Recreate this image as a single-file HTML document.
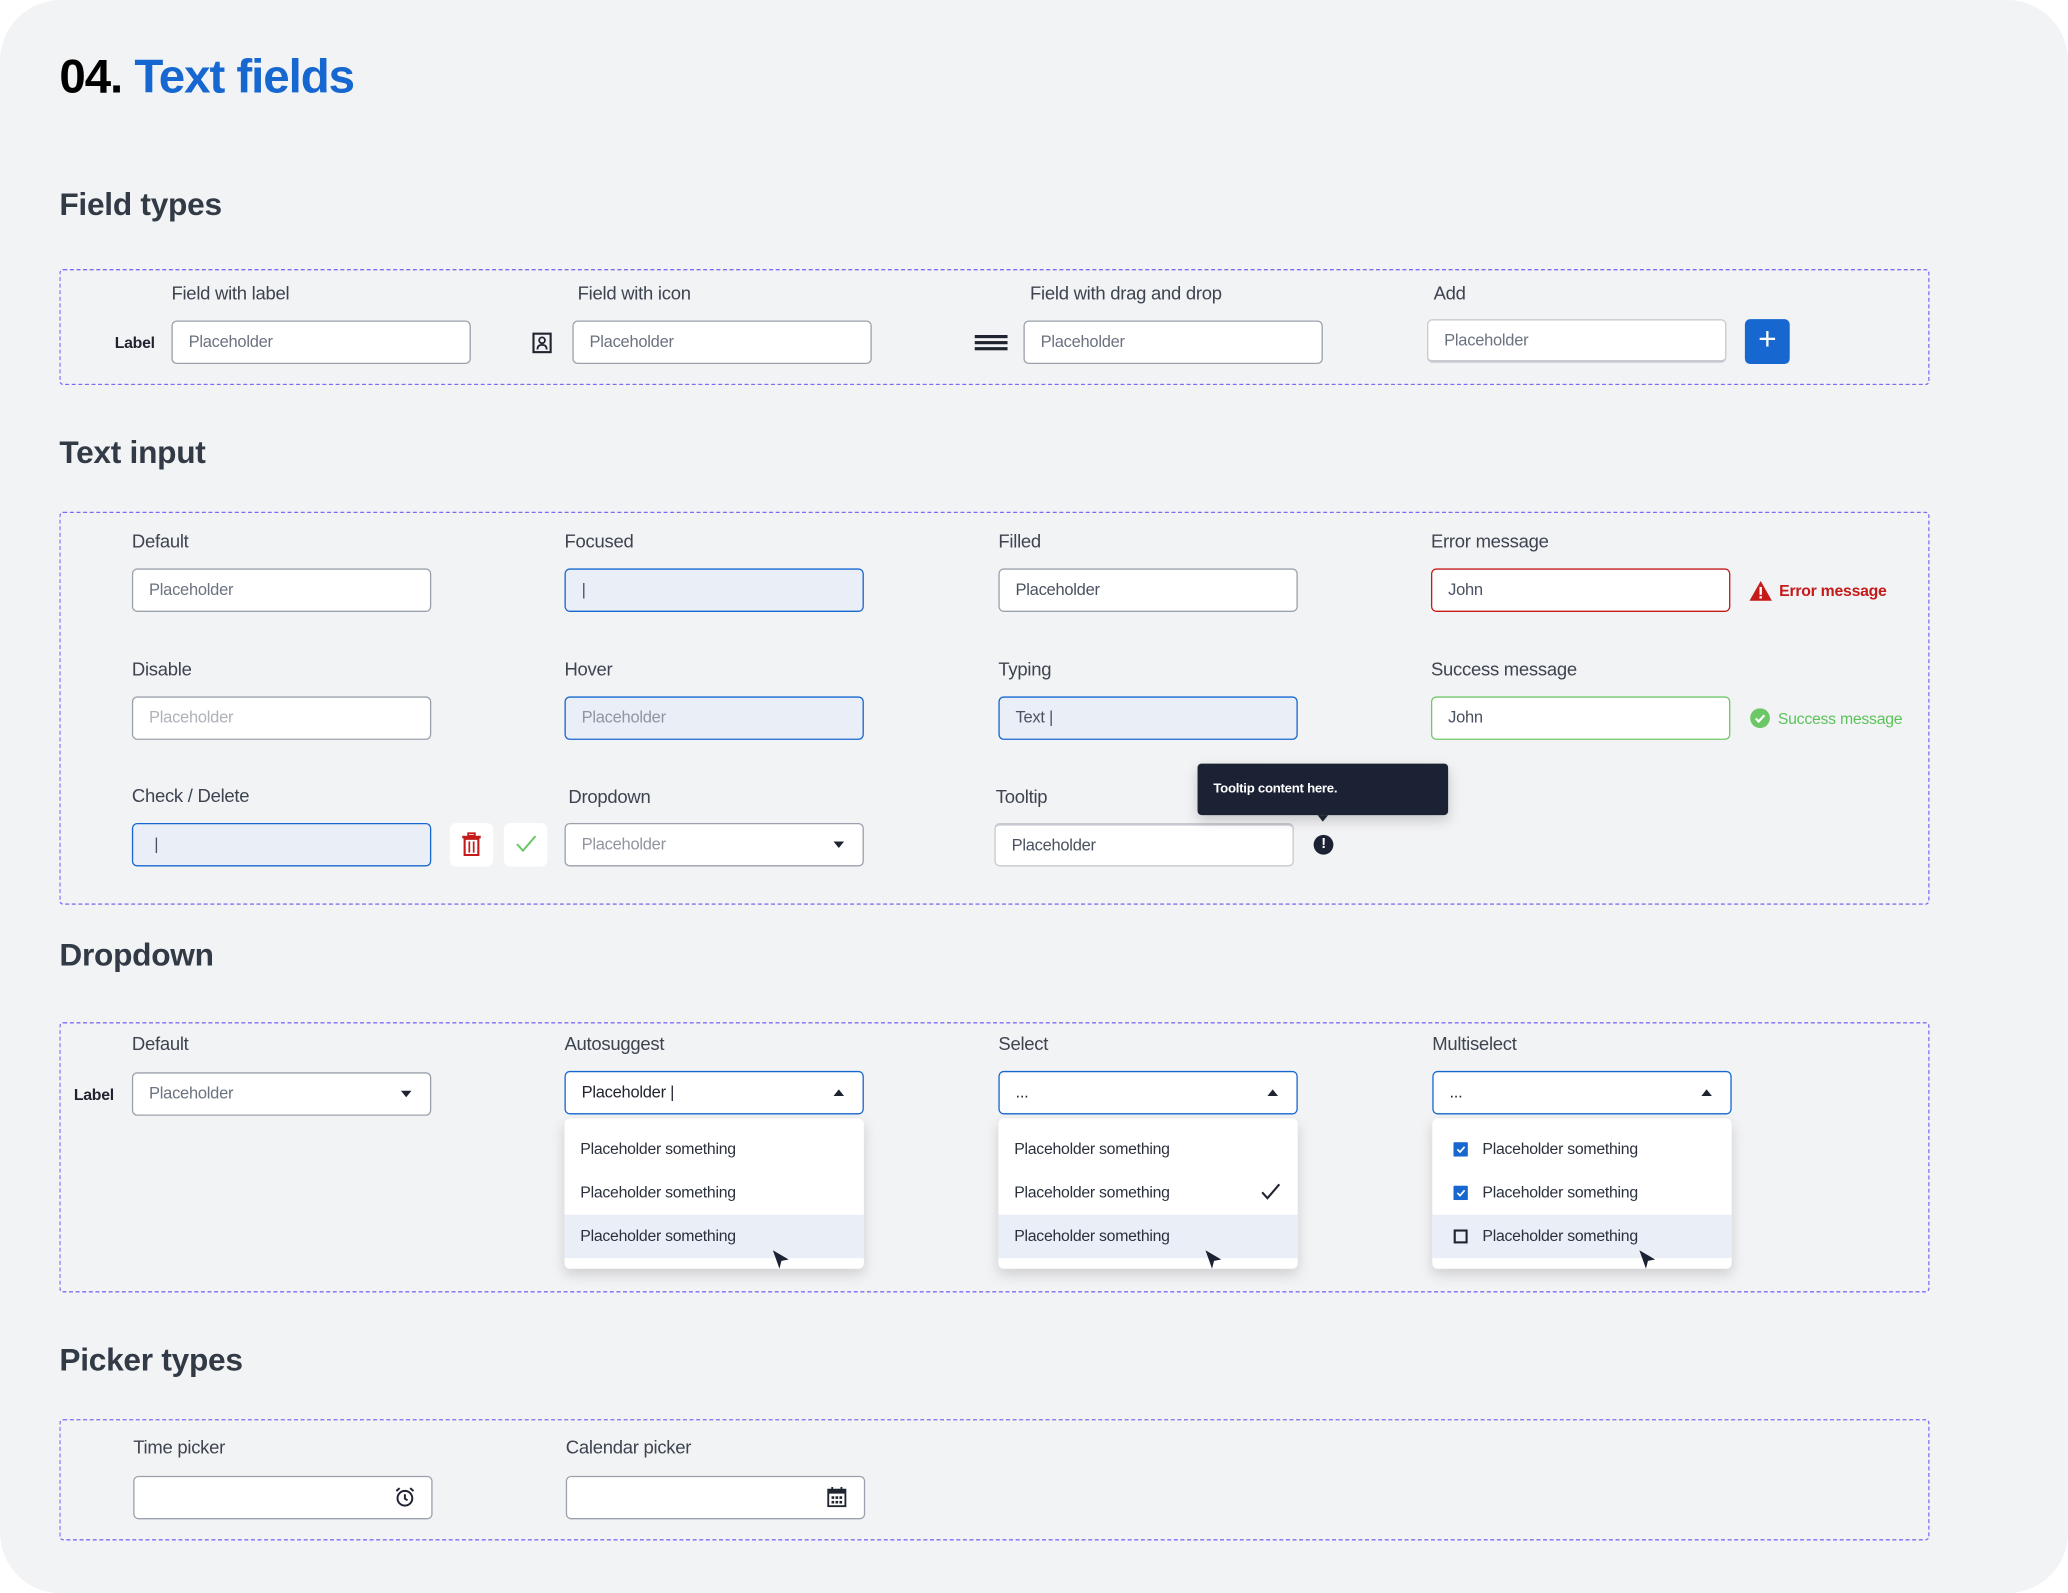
<!DOCTYPE html>
<html><head><meta charset="utf-8">
<style>
*{box-sizing:border-box;margin:0;padding:0}
html,body{width:2068px;height:1593px;overflow:hidden;background:#fff}
#w{position:absolute;left:0;top:0;width:1568px;height:1208px;transform:scale(1.31888);transform-origin:0 0;background:#f2f3f5;border-radius:46px;font-family:"Liberation Sans",sans-serif;letter-spacing:-0.2px;color:#3d4450}
.a{position:absolute}
.h{position:absolute;left:45px;font-size:24px;font-weight:bold;color:#323a46}
.box{position:absolute;left:45px;width:1418px;border:1.3px dashed #7d6cf2;border-radius:3px}
.lb{position:absolute;font-size:14px;color:#3d4450;transform:translateY(-50%)}
.in{position:absolute;width:227px;height:33px;background:#fff;border:1px solid #9ba1ac;border-radius:4px;font-size:12.5px;color:#4a5160;padding-left:12px;line-height:31px;white-space:nowrap}
.ph{color:#6b7280}
.foc{background:#e9eef7;border-color:#1767d0}
.sm{position:absolute;font-size:12px;font-weight:bold;color:#1f2430;transform:translateY(-50%)}
.menu{position:absolute;width:227px;height:114px;background:#fff;border-radius:4px;box-shadow:0 4px 10px rgba(0,0,0,.15)}
.it{position:absolute;left:0;width:227px;height:33px;font-size:12px;color:#2a303c;line-height:33px;padding-left:12px}
.car{position:absolute;right:14px;top:13px;width:0;height:0;border-left:4px solid transparent;border-right:4px solid transparent}
.dn{border-top:5px solid #1f2430}
.up{border-bottom:5px solid #1f2430}
</style></head><body><div id="w">
<div class="a" style="left:45px;top:37px;font-size:36px;font-weight:bold;color:#000;letter-spacing:-0.8px">04. <span style="color:#1767d0">Text fields</span></div>

<div class="h" style="top:142px">Field types</div>
<div class="box" style="top:204px;height:88px"></div>
<div class="lb" style="left:130px;top:222px">Field with label</div>
<div class="lb" style="left:438px;top:222px">Field with icon</div>
<div class="lb" style="left:781px;top:222px">Field with drag and drop</div>
<div class="lb" style="left:1087px;top:222px">Add</div>
<div class="sm" style="left:87px;top:260px">Label</div>
<div class="in ph" style="left:130px;top:243px">Placeholder</div>
<svg class="a" style="left:403px;top:252px" width="16" height="16" viewBox="0 0 16 16"><rect x="1.5" y="1" width="13" height="14" fill="none" stroke="#1f2430" stroke-width="1.6"/><circle cx="8" cy="6" r="2.2" fill="none" stroke="#1f2430" stroke-width="1.4"/><path d="M4.5 13c0-2.5 1.5-3.5 3.5-3.5s3.5 1 3.5 3.5" fill="none" stroke="#1f2430" stroke-width="1.4"/></svg>
<div class="in ph" style="left:434px;top:243px">Placeholder</div>
<svg class="a" style="left:739px;top:254px" width="25" height="12"><rect y="0" width="25" height="2.4" fill="#1f2430"/><rect y="4.6" width="25" height="2.4" fill="#1f2430"/><rect y="9.2" width="25" height="2.4" fill="#1f2430"/></svg>
<div class="in ph" style="left:776px;top:243px">Placeholder</div>
<div class="in ph" style="left:1082px;top:242px;border-color:#c7cad0;border-width:1px 1px 2px 1px">Placeholder</div>
<div class="a" style="left:1323px;top:242px;width:34px;height:34px;background:#1767d0;border-radius:4px;color:#fff;font-size:24px;line-height:32px;text-align:center">+</div>

<div class="h" style="top:330px">Text input</div>
<div class="box" style="top:388px;height:298px"></div>
<div class="lb" style="left:100px;top:410px">Default</div>
<div class="lb" style="left:428px;top:410px">Focused</div>
<div class="lb" style="left:757px;top:410px">Filled</div>
<div class="lb" style="left:1085px;top:410px">Error message</div>
<div class="in ph" style="left:100px;top:431px">Placeholder</div>
<div class="in foc" style="left:428px;top:431px">|</div>
<div class="in" style="left:757px;top:431px">Placeholder</div>
<div class="in" style="left:1085px;top:431px;border-color:#c41a1a">John</div>
<svg class="a" style="left:1326px;top:440px" width="18" height="16" viewBox="0 0 18 16"><path d="M9 0.5L17.5 15.5H0.5Z" fill="#c41a1a"/><rect x="8.1" y="5" width="1.8" height="6" fill="#fff"/><rect x="8.1" y="12" width="1.8" height="1.8" fill="#fff"/></svg>
<div class="a" style="left:1349px;top:441px;font-size:12px;font-weight:bold;color:#c41a1a">Error message</div>

<div class="lb" style="left:100px;top:507px">Disable</div>
<div class="lb" style="left:428px;top:507px">Hover</div>
<div class="lb" style="left:757px;top:507px">Typing</div>
<div class="lb" style="left:1085px;top:507px">Success message</div>
<div class="in" style="left:100px;top:528px;color:#aeb2b9">Placeholder</div>
<div class="in foc" style="left:428px;top:528px;color:#9095a0">Placeholder</div>
<div class="in foc" style="left:757px;top:528px">Text |</div>
<div class="in" style="left:1085px;top:528px;border-color:#72c86a">John</div>
<svg class="a" style="left:1327px;top:537px" width="15" height="15" viewBox="0 0 16 16"><circle cx="8" cy="8" r="8" fill="#6cc766"/><path d="M4.5 8.3l2.4 2.4 4.6-5" fill="none" stroke="#fff" stroke-width="1.8"/></svg>
<div class="a" style="left:1348px;top:538px;font-size:12px;color:#5cc35a">Success message</div>

<div class="lb" style="left:100px;top:603px">Check / Delete</div>
<div class="lb" style="left:431px;top:604px">Dropdown</div>
<div class="lb" style="left:755px;top:604px">Tooltip</div>
<div class="in foc" style="left:100px;top:624px;padding-left:16px">|</div>
<div class="a" style="left:341px;top:624px;width:33px;height:33px;background:#fff;border-radius:5px"></div>
<svg class="a" style="left:350px;top:631px" width="15" height="18" viewBox="0 0 15 18"><rect x="5" y="0.7" width="5" height="2" fill="none" stroke="#c41a1a" stroke-width="1.4"/><rect x="0.5" y="2.7" width="14" height="2" fill="#c41a1a"/><rect x="2.3" y="5" width="10.4" height="12.3" fill="none" stroke="#c41a1a" stroke-width="1.6"/><rect x="5.2" y="7" width="1.3" height="8.5" fill="#c41a1a"/><rect x="8.5" y="7" width="1.3" height="8.5" fill="#c41a1a"/></svg>
<div class="a" style="left:382px;top:624px;width:33px;height:33px;background:#fff;border-radius:5px"></div>
<svg class="a" style="left:391px;top:633px" width="16" height="14"><path d="M1 7l4.5 5L15 1" fill="none" stroke="#6cc766" stroke-width="1.5"/></svg>
<div class="in" style="left:428px;top:624px;color:#9095a0">Placeholder<span class="car dn"></span></div>
<div class="in" style="left:754px;top:624px;border-color:#c7cad0;border-width:2px 1px 1px 1px">Placeholder</div>
<div class="a" style="left:908px;top:579px;width:190px;height:39px;background:#1b2233;border-radius:3px;box-shadow:0 4px 10px rgba(0,0,0,.18);color:#fff;font-size:10px;font-weight:bold;line-height:39px;padding-left:12px">Tooltip content here.</div>
<div class="a" style="left:999px;top:618px;border-left:4px solid transparent;border-right:4px solid transparent;border-top:5px solid #1b2233"></div>
<div class="a" style="left:996px;top:633px;width:15px;height:15px;border-radius:50%;background:#1b2233;color:#fff;font-size:11px;font-weight:bold;text-align:center;line-height:15px">!</div>

<div class="h" style="top:711px">Dropdown</div>
<div class="box" style="top:775px;height:205px"></div>
<div class="lb" style="left:100px;top:791px">Default</div>
<div class="lb" style="left:428px;top:791px">Autosuggest</div>
<div class="lb" style="left:757px;top:791px">Select</div>
<div class="lb" style="left:1086px;top:791px">Multiselect</div>
<div class="sm" style="left:56px;top:830px">Label</div>
<div class="in ph" style="left:100px;top:813px">Placeholder<span class="car dn"></span></div>
<div class="in" style="left:428px;top:812px;border-color:#1767d0;color:#1f2430">Placeholder |<span class="car up"></span></div>
<div class="in" style="left:757px;top:812px;border-color:#1767d0;color:#1f2430">...<span class="car up"></span></div>
<div class="in" style="left:1086px;top:812px;border-color:#1767d0;color:#1f2430">...<span class="car up"></span></div>

<div class="menu" style="left:428px;top:848px">
<div class="it" style="top:7px">Placeholder something</div>
<div class="it" style="top:40px">Placeholder something</div>
<div class="it" style="top:73px;background:#e9eef7">Placeholder something</div></div>
<div class="menu" style="left:757px;top:848px">
<div class="it" style="top:7px">Placeholder something</div>
<div class="it" style="top:40px">Placeholder something</div>
<div class="it" style="top:73px;background:#e9eef7">Placeholder something</div></div>
<svg class="a" style="left:956px;top:897px" width="15" height="13"><path d="M1 7l4 4.5L14 1" fill="none" stroke="#1f2430" stroke-width="1.6"/></svg>
<div class="menu" style="left:1086px;top:848px">
<div class="it" style="top:7px;padding-left:38px">Placeholder something</div>
<div class="it" style="top:40px;padding-left:38px">Placeholder something</div>
<div class="it" style="top:73px;background:#e9eef7;padding-left:38px">Placeholder something</div></div>
<svg class="a" style="left:1102px;top:866px" width="11" height="11"><rect width="11" height="11" rx="1" fill="#1767d0"/><path d="M3 5.5l2 2 3.5-4" fill="none" stroke="#fff" stroke-width="1.3"/></svg>
<svg class="a" style="left:1102px;top:899px" width="11" height="11"><rect width="11" height="11" rx="1" fill="#1767d0"/><path d="M3 5.5l2 2 3.5-4" fill="none" stroke="#fff" stroke-width="1.3"/></svg>
<svg class="a" style="left:1102px;top:932px" width="11" height="11"><rect x="1" y="1" width="9" height="9" fill="none" stroke="#1f2430" stroke-width="1.6"/></svg>
<svg class="a" style="left:585px;top:947px" width="14" height="16"><path d="M1 1L13 8L7.5 9L6 15Z" fill="#1b2233"/></svg>
<svg class="a" style="left:913px;top:947px" width="14" height="16"><path d="M1 1L13 8L7.5 9L6 15Z" fill="#1b2233"/></svg>
<svg class="a" style="left:1242px;top:947px" width="14" height="16"><path d="M1 1L13 8L7.5 9L6 15Z" fill="#1b2233"/></svg>

<div class="h" style="top:1018px">Picker types</div>
<div class="box" style="top:1076px;height:92px"></div>
<div class="lb" style="left:101px;top:1097px">Time picker</div>
<div class="lb" style="left:429px;top:1097px">Calendar picker</div>
<div class="in" style="left:101px;top:1119px"></div>
<svg class="a" style="left:299px;top:1127px" width="16" height="16" viewBox="0 0 16 16"><circle cx="8" cy="9" r="5.6" fill="none" stroke="#1f2430" stroke-width="1.5"/><path d="M8 6v3.3l2 1.3M1.5 3.5L4 1.3M14.5 3.5L12 1.3" fill="none" stroke="#1f2430" stroke-width="1.5"/></svg>
<div class="in" style="left:429px;top:1119px"></div>
<svg class="a" style="left:627px;top:1127px" width="15" height="16" viewBox="0 0 15 16"><rect x="1" y="2.5" width="13" height="12.5" fill="none" stroke="#1f2430" stroke-width="1.4"/><rect x="1" y="2.5" width="13" height="3" fill="#1f2430"/><path d="M4 0.5v3M11 0.5v3" stroke="#1f2430" stroke-width="1.4"/><g fill="#1f2430"><rect x="3.5" y="7.5" width="2" height="2"/><rect x="6.5" y="7.5" width="2" height="2"/><rect x="9.5" y="7.5" width="2" height="2"/><rect x="3.5" y="11" width="2" height="2"/><rect x="6.5" y="11" width="2" height="2"/><rect x="9.5" y="11" width="2" height="2"/></g></svg>
</div></body></html>
